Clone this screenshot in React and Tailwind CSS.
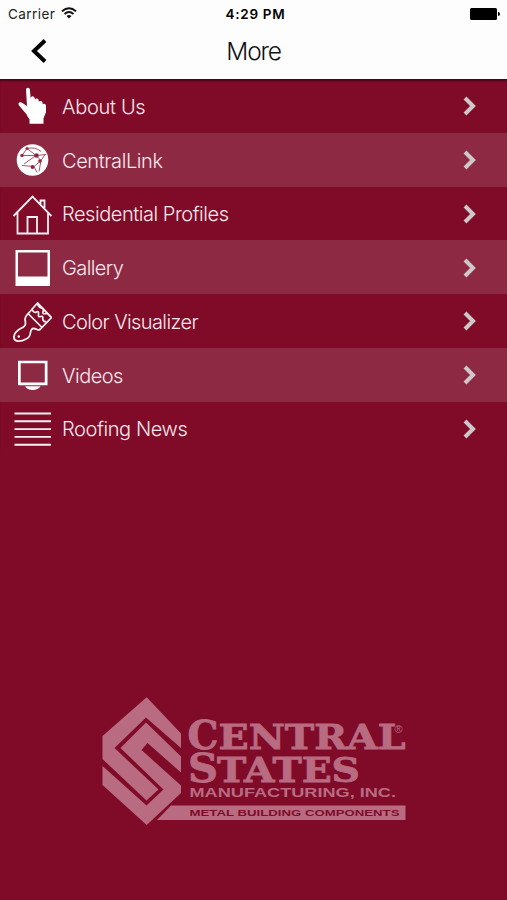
const FONT = "font-['Inter','Liberation_Sans',sans-serif]";

const S = ({ children, w = 40, h = 54 }) => (
  <svg className="shrink-0" width={w} height={h} viewBox={`0 0 ${w} ${h}`} fill="none" stroke="#fbf0f3" strokeWidth="1.8">{children}</svg>
);

const Hand = () => (
  <S><path stroke="none" fill="#fff" d="M14 10.800q0-2 1.900-2t2 2l.8 8.500q.3-2 2-2t2 2l.2 1.500q.5-1.500 2-1.300 1.700.2 1.800 2l.1 1.300q.5-1 2-.8 1.700.2 1.800 2v1.300q.5-.8 1.800-.6 1.600.3 1.600 2v6.600l-2.500 6v5.500H17.500v-4.500q-1.500-1.500-3-5L7 26.500q-1.500-2 .2-3 1.700-.7 3.200.6l4.600 3z" /></S>
);
const Globe = () => (
  <S>
    <circle cx="20.500" cy="27" r="15.800" fill="#fff" stroke="none" />
    <g stroke="#8e2944" strokeWidth=".8"><path d="M15 15.500l9 7 10-1M10 22.500h14l5 5-7 6M10 22.500l5-7M15 15.500q8-2 14 3M24 22.500L12 31M29 27.500l4-6M22 33.500l-12-1M22 33.500l3 6M29 27.500l-2 11" /></g>
    <g fill="#8e2944" stroke="none"><circle cx="24.500" cy="22.500" r="2.300" /><circle cx="28" cy="28" r="1.800" /><circle cx="20.500" cy="34" r="1.900" /><circle cx="10" cy="22.500" r="1.700" /><circle cx="15" cy="15.500" r="1.500" /></g>
  </S>
);
const House = () => (
  <S><path d="M5.500 25.500V46.500H36V25.500M1.500 29L20.500 9.500 39.500 29M28.500 17v-3.500h4V21M15.500 46V30h9.500V46" /></S>
);
const Photo = () => (
  <S><path fillRule="evenodd" fill="#fff" stroke="none" d="M3.500 9h34.500v36H3.500zM6 11.500V35.500H35.500V11.500z" /></S>
);
const Brush = () => (
  <S>
    <path strokeLinejoin="round" d="M25.500 9L39.500 23.500 28.500 35q-1.500 1.500-3.500.5-4-2-5.500 0-.8 1-1 3-.5 5-4.500 6.500-4 2.500-9 2-3.500-1-3-4.500.5-4.500 6.500-8 5-2 5-5 0-2-.5-4 0-2 1.500-4z" />
    <path strokeWidth="1.700" d="M16 19.500L30 33.500M20 15.500q2 4 4.500 2.500t2 2q-.5 3.500 2 2.500t2.300 2 3.700 3.500M25.500 9.500q1 4 4 4.500t1.500 3.500 4 2" />
    <circle cx="6.800" cy="42.500" r="1.200" fill="#fff" stroke="none" />
  </S>
);
const Tv = () => (
  <S><path stroke="none" fill="#fff" fillRule="evenodd" d="M6 12.800H35.500V37.300H6zM8.700 15.300V34.500H32.800V15.300z" /><path stroke="none" fill="#fff" d="M13 38.200H28.500Q26 42 20.700 42T13 38.200z" /></S>
);
const Lines = () => (
  <S><path d="M2.500 11.500h36.500M2.500 19.300h36.500M2.500 27.100h36.500M2.500 34.900h36.500M2.500 42.700h36.500" strokeWidth="1.900" /></S>
);

const rows = [
  ["About Us", Hand, "tracking-[-0.3px]"],
  ["CentralLink", Globe, "tracking-[-0.4px]"],
  ["Residential Profiles", House, "tracking-[-0.46px]"],
  ["Gallery", Photo, "tracking-[-0.6px]"],
  ["Color Visualizer", Brush, "tracking-[-0.6px]"],
  ["Videos", Tv, "tracking-[-0.5px]"],
  ["Roofing News", Lines, "tracking-[-0.4px]"],
];

const Word = ({ x, y, size, width, font = "'DejaVu Serif', serif", fill = "#b96b82", stroke = 0, children }) => (
  <text x={x} y={y} fontFamily={font} fontWeight="bold" fontSize={size} textLength={width}
    lengthAdjust="spacingAndGlyphs" fill={fill} stroke={fill} strokeWidth={stroke}>{children}</text>
);
const SANS = "'Liberation Sans', sans-serif";

function Logo() {
  return (
    <svg width="310" height="136" viewBox="98 693 310 136" fill="#b96b82">
      <path d="M146.700 697.300L181 733.500V748L146 717.500 114.500 748 158.500 789.500 146.500 800.500 102.500 759V736z" />
      <path d="M146 722.500L181 756.500V772.500L147.500 743 141.500 750 181 785.500V793L146.700 825 102.500 785V766L146.500 805.500 163.500 789.500 120.500 748z" />
      <path d="M171 805.500H405.500V820H157z" />
      <Word x={187.500} y={749} size={38.500} width={31} stroke={0.8}>C</Word>
      <Word x={218.500} y={748.800} size={33} width={187} stroke={0.8}>ENTRAL</Word>
      <Word x={188} y={781.500} size={38.500} width={30} stroke={0.8}>S</Word>
      <Word x={217} y={781.500} size={33} width={143} stroke={0.8}>TATES</Word>
      <Word x={189.500} y={797} size={12} width={206.500} font={SANS}>MANUFACTURING, INC.</Word>
      <Word x={189.500} y={816.200} size={9.500} width={210} font={SANS} fill="#800b29">METAL BUILDING COMPONENTS</Word>
      <text x="394.500" y="732.500" fontFamily="Liberation Sans" fontSize="11">®</text>
    </svg>
  );
}

export default function App() {
  return (
    <div className={`flex h-[900px] w-[507px] flex-col overflow-hidden bg-[#800b29] ${FONT}`}>
      <header className="h-[79px] shrink-0 bg-[#fdfdfd] text-black">
        <div className="grid h-7 grid-cols-3 items-center text-[13.5px]">
          <div className="flex items-center gap-1.5 pl-2">
            <span className="tracking-[0.45px] text-[#222]">Carrier</span>
            <svg className="-mt-0.5" width="16" height="12" viewBox="0 0 16 12" fill="none" stroke="#111" strokeWidth="1.800"><path d="M1 4.200q7-6 14 0M3.500 7q4.500-4 9 0" /><path d="M5.500 9q2.500-2 5 0L8 11.500z" fill="#111" stroke="none" /></svg>
          </div>
          <div className="pl-1 pt-px text-center font-semibold tracking-[0.7px]">4:29 PM</div>
          <svg className="mr-[6px] justify-self-end" width="31" height="12"><rect width="27" height="12" rx="1.500" /><path d="M28 4q2 0 2 2t-2 2z" /></svg>
        </div>
        <div className="grid h-[46px] grid-cols-3 items-center">
          <svg className="ml-[31px]" width="16" height="24" viewBox="0 0 16 24" fill="none" stroke="#000" strokeWidth="4"><path d="M14 1.500L3 12 14 22.500" /></svg>
          <h1 className="text-center text-[24.500px] font-light tracking-[-1.2px] text-[#111]">More</h1>
        </div>
      </header>
      <ul className="shrink-0 shadow-[inset_0_3px_2px_-1px_#45061a]">
        {rows.map(([label, Icon, tracking], i) => (
          <li key={label} className={`flex h-[53.750px] items-center pl-3 pr-[30px] pt-px ${i % 2 ? "bg-[#8e2944]" : ""}`}>
            <Icon />
            <span className={`ml-[10px] flex-1 pt-px text-[20px] font-light text-[#fbe6ec] ${tracking}`}>{label}</span>
            <svg width="15" height="20" viewBox="0 0 15 20" fill="none" stroke="#cfc8ca" strokeWidth="4"><path d="M3 2l8 8-8 8" /></svg>
          </li>
        ))}
      </ul>
      <div className="mt-auto mb-[71px] ml-[98px] h-[136px]"><Logo /></div>
    </div>
  );
}
